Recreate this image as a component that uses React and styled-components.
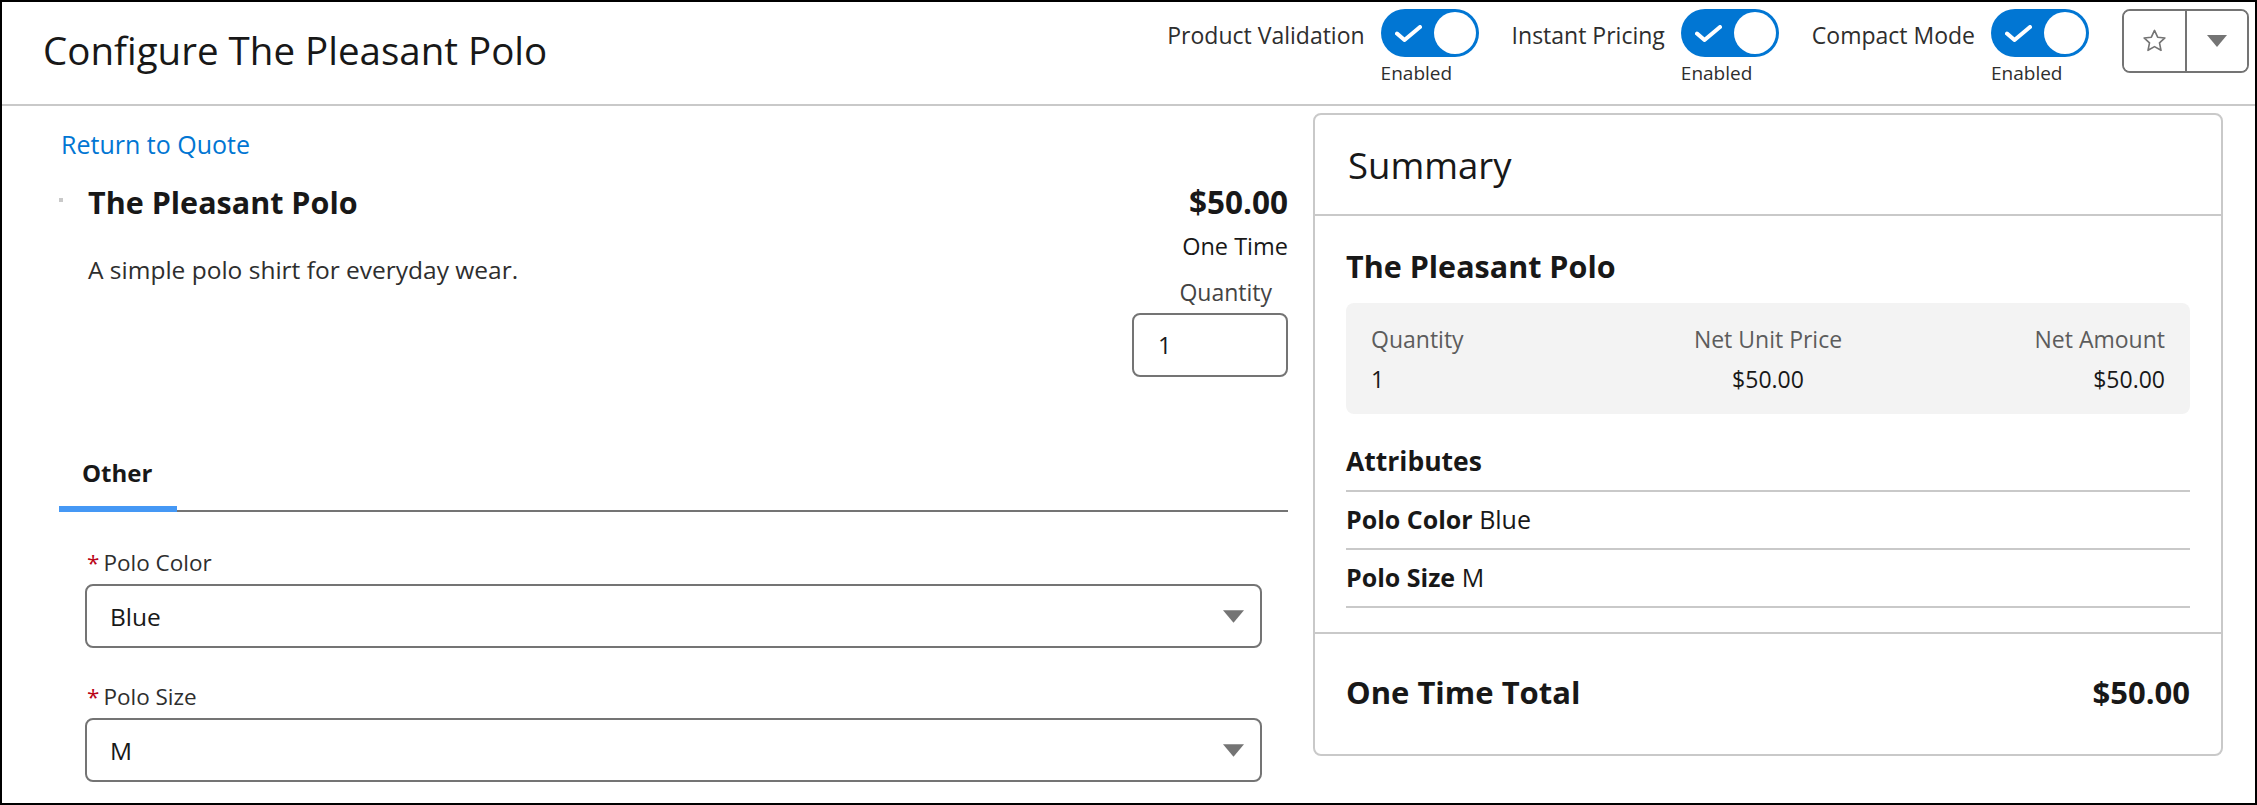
import React from 'react';
import styled, { createGlobalStyle } from 'styled-components';

const GlobalStyle = createGlobalStyle`
  html, body {
    margin: 0;
    padding: 0;
    background: #ffffff;
  }
  body {
    font-family: 'Open Sans', 'Noto Sans', sans-serif;
    color: #181818;
  }
  * {
    box-sizing: border-box;
  }
`;

const Frame = styled.div`
  width: 2257px;
  height: 805px;
  border: 2px solid #000;
  overflow: hidden;
  display: flex;
  flex-direction: column;
`;

const Header = styled.header`
  height: 104px;
  flex-shrink: 0;
  display: flex;
  justify-content: space-between;
  align-items: flex-start;
  padding: 7px 6px 0 41px;
  border-bottom: 2px solid #c9c9c9;
`;

const PageTitle = styled.h1`
  margin: 17px 0 0;
  font-size: 38.5px;
  line-height: 48px;
  font-weight: 400;
  color: #181818;
`;

const Controls = styled.div`
  display: flex;
  align-items: flex-start;
  gap: 33px;
`;

const ToggleItem = styled.div`
  display: grid;
  grid-template-columns: auto auto;
  column-gap: 16px;
`;

const ToggleLabel = styled.span`
  grid-row: 1;
  grid-column: 1;
  margin-top: 12px;
  font-size: 23px;
  line-height: 28px;
  color: #2e2e2e;
`;

const Switch = styled.span`
  grid-row: 1;
  grid-column: 2;
  width: 98px;
  height: 48px;
  border-radius: 24px;
  background: ${(props) => (props.on ? '#0176d3' : '#c9c9c9')};
  display: flex;
  align-items: center;
  padding: 0 3px 0 14px;
  justify-content: space-between;
`;

const Knob = styled.span`
  width: 42px;
  height: 42px;
  border-radius: 50%;
  background: #fff;
`;

const ToggleCaption = styled.span`
  grid-row: 2;
  grid-column: 2;
  margin-top: 4px;
  font-size: 19px;
  line-height: 24px;
  color: #2e2e2e;
`;

const ButtonGroup = styled.div`
  display: flex;
  height: 64px;
  border: 2px solid #747474;
  border-radius: 8px;
  overflow: hidden;
`;

const IconButton = styled.button`
  width: ${(props) => props.w}px;
  height: 100%;
  border: 0;
  border-left: ${(props) => (props.divided ? '2px solid #747474' : '0')};
  background: #fff;
  padding: 0;
  display: flex;
  align-items: center;
  justify-content: center;
`;

const Body = styled.div`
  flex: 1;
  display: flex;
  align-items: flex-start;
  gap: 25px;
  padding: 7px 32px 0 57px;
`;

const Main = styled.section`
  flex: 1;
  min-width: 0;
`;

const BackLink = styled.a`
  display: block;
  margin-top: 16px;
  padding-left: 2px;
  font-size: 25px;
  line-height: 30px;
  color: #0176d3;
  text-decoration: none;
`;

const ProductRow = styled.div`
  display: flex;
  justify-content: space-between;
  margin-top: 24px;
`;

const ProductInfo = styled.div`
  display: flex;
  align-items: flex-start;
`;

const Thumb = styled.span`
  width: 4px;
  height: 4px;
  margin: 15px 25px 0 0;
  background: #c9c9c9;
`;

const ProductName = styled.h2`
  margin: 0;
  font-size: 30.5px;
  line-height: 38px;
  font-weight: 700;
  color: #181818;
`;

const Description = styled.p`
  margin: 33px 0 0;
  font-size: 24.5px;
  line-height: 32px;
  color: #2e2e2e;
`;

const PriceBlock = styled.div`
  display: flex;
  flex-direction: column;
  align-items: flex-end;
`;

const Price = styled.div`
  font-size: 31.5px;
  line-height: 38px;
  font-weight: 700;
`;

const Frequency = styled.div`
  margin-top: 10px;
  font-size: 23.5px;
  line-height: 30px;
  color: #181818;
`;

const QtyLabel = styled.label`
  margin: 16px 16px 0 0;
  font-size: 23px;
  line-height: 30px;
  color: #444444;
`;

const QtyInput = styled.div`
  margin-top: 6px;
  width: 156px;
  height: 64px;
  border: 2px solid #747474;
  border-radius: 8px;
  padding-left: 24px;
  display: flex;
  align-items: center;
  font-size: 23.5px;
  color: #181818;
`;

const Tabs = styled.div`
  display: flex;
  margin-top: 81px;
  border-bottom: 2px solid #747474;
`;

const Tab = styled.div`
  padding: 0 25px 18px 23px;
  margin-bottom: -2px;
  border-bottom: 6px solid ${(props) => (props.active ? '#4598f5' : 'transparent')};
  font-size: 24px;
  line-height: 30px;
  font-weight: 700;
  color: #181818;
`;

const Fields = styled.div`
  padding: 0 26px;
`;

const Field = styled.div`
  margin-top: ${(props) => props.top}px;
`;

const FieldLabel = styled.div`
  margin-bottom: 7px;
  padding-left: 2px;
  font-size: 22.5px;
  line-height: 28px;
  color: #2e2e2e;
`;

const Required = styled.abbr`
  margin-right: 4px;
  color: #ba0517;
  text-decoration: none;
`;

const Select = styled.div`
  height: 64px;
  border: 2px solid #747474;
  border-radius: 8px;
  padding: 0 16px 0 23px;
  display: flex;
  align-items: center;
  justify-content: space-between;
  font-size: 24.5px;
  color: #181818;
`;

const Card = styled.aside`
  width: 910px;
  flex-shrink: 0;
  border: 2px solid #c9c9c9;
  border-radius: 8px;
`;

const CardHeader = styled.div`
  padding: 28px 31px 27px 33px;
  border-bottom: 2px solid #c9c9c9;
  font-size: 36.5px;
  line-height: 44px;
  color: #181818;
`;

const CardBody = styled.div`
  padding: 31px 31px 24px;
`;

const LineTitle = styled.div`
  font-size: 30.5px;
  line-height: 38px;
  font-weight: 700;
`;

const PriceTable = styled.div`
  margin-top: 18px;
  display: grid;
  grid-template-columns: 1fr 1fr 1fr;
  row-gap: 10px;
  padding: 21px 25px 20px;
  background: #f3f3f3;
  border-radius: 8px;
`;

const Cell = styled.div`
  font-size: 23px;
  line-height: 30px;
  text-align: ${(props) => props.align || 'left'};
  color: ${(props) => (props.head ? '#5c5c5c' : '#181818')};
`;

const SectionTitle = styled.div`
  margin-top: 30px;
  padding-bottom: 12px;
  border-bottom: 2px solid #c9c9c9;
  font-size: 26.5px;
  line-height: 34px;
  font-weight: 700;
`;

const AttrRow = styled.div`
  padding: 11px 0 13px;
  border-bottom: 2px solid #c9c9c9;
  font-size: 25px;
  line-height: 32px;
  color: #181818;

  b {
    font-weight: 700;
  }
`;

const CardFooter = styled.div`
  display: flex;
  justify-content: space-between;
  padding: 39px 31px 43px;
  border-top: 2px solid #c9c9c9;
  font-size: 31px;
  line-height: 38px;
  font-weight: 700;
`;

const Check = () => (
  <svg width="27" height="17" viewBox="0 0 27 17" fill="none">
    <path d="M2 8.5 L9.5 15 L25 2" stroke="#fff" strokeWidth="4" strokeLinecap="round" strokeLinejoin="round" />
  </svg>
);

const Star = () => (
  <svg width="27" height="26" viewBox="0 0 24 24" fill="none">
    <polygon
      points="12,2.2 14.9,8.5 21.6,9.2 16.6,13.8 18,20.6 12,17.2 6,20.6 7.4,13.8 2.4,9.2 9.1,8.5"
      stroke="#747474"
      strokeWidth="1.5"
      strokeLinejoin="round"
    />
  </svg>
);

const Caret = ({ size = 21 }) => (
  <svg width={size} height={Math.round(size * 0.6)} viewBox="0 0 20 12">
    <polygon points="0,0 20,0 10,12" fill="#747474" />
  </svg>
);

const toggles = ['Product Validation', 'Instant Pricing', 'Compact Mode'];

const fields = [
  { label: 'Polo Color', value: 'Blue', top: 37 },
  { label: 'Polo Size', value: 'M', top: 35 },
];

const attributes = [
  { name: 'Polo Color', value: 'Blue' },
  { name: 'Polo Size', value: 'M' },
];

export default function App() {
  return (
    <>
      <GlobalStyle />
      <Frame>
        <Header>
          <PageTitle>Configure The Pleasant Polo</PageTitle>
          <Controls>
            {toggles.map((t) => (
              <ToggleItem key={t}>
                <ToggleLabel>{t}</ToggleLabel>
                <Switch on>
                  <Check />
                  <Knob />
                </Switch>
                <ToggleCaption>Enabled</ToggleCaption>
              </ToggleItem>
            ))}
            <ButtonGroup>
              <IconButton w={61}>
                <Star />
              </IconButton>
              <IconButton w={62} divided>
                <Caret size={20} />
              </IconButton>
            </ButtonGroup>
          </Controls>
        </Header>

        <Body>
          <Main>
            <BackLink href="#">Return to Quote</BackLink>
            <ProductRow>
              <ProductInfo>
                <Thumb />
                <div>
                  <ProductName>The Pleasant Polo</ProductName>
                  <Description>A simple polo shirt for everyday wear.</Description>
                </div>
              </ProductInfo>
              <PriceBlock>
                <Price>$50.00</Price>
                <Frequency>One Time</Frequency>
                <QtyLabel>Quantity</QtyLabel>
                <QtyInput>1</QtyInput>
              </PriceBlock>
            </ProductRow>

            <Tabs>
              <Tab active>Other</Tab>
            </Tabs>

            <Fields>
              {fields.map((f) => (
                <Field key={f.label} top={f.top}>
                  <FieldLabel>
                    <Required title="required">*</Required>
                    {f.label}
                  </FieldLabel>
                  <Select>
                    <span>{f.value}</span>
                    <Caret />
                  </Select>
                </Field>
              ))}
            </Fields>
          </Main>

          <Card>
            <CardHeader>Summary</CardHeader>
            <CardBody>
              <LineTitle>The Pleasant Polo</LineTitle>
              <PriceTable>
                <Cell head>Quantity</Cell>
                <Cell head align="center">Net Unit Price</Cell>
                <Cell head align="right">Net Amount</Cell>
                <Cell>1</Cell>
                <Cell align="center">$50.00</Cell>
                <Cell align="right">$50.00</Cell>
              </PriceTable>
              <SectionTitle>Attributes</SectionTitle>
              {attributes.map((a) => (
                <AttrRow key={a.name}>
                  <b>{a.name}</b> {a.value}
                </AttrRow>
              ))}
            </CardBody>
            <CardFooter>
              <span>One Time Total</span>
              <span>$50.00</span>
            </CardFooter>
          </Card>
        </Body>
      </Frame>
    </>
  );
}
